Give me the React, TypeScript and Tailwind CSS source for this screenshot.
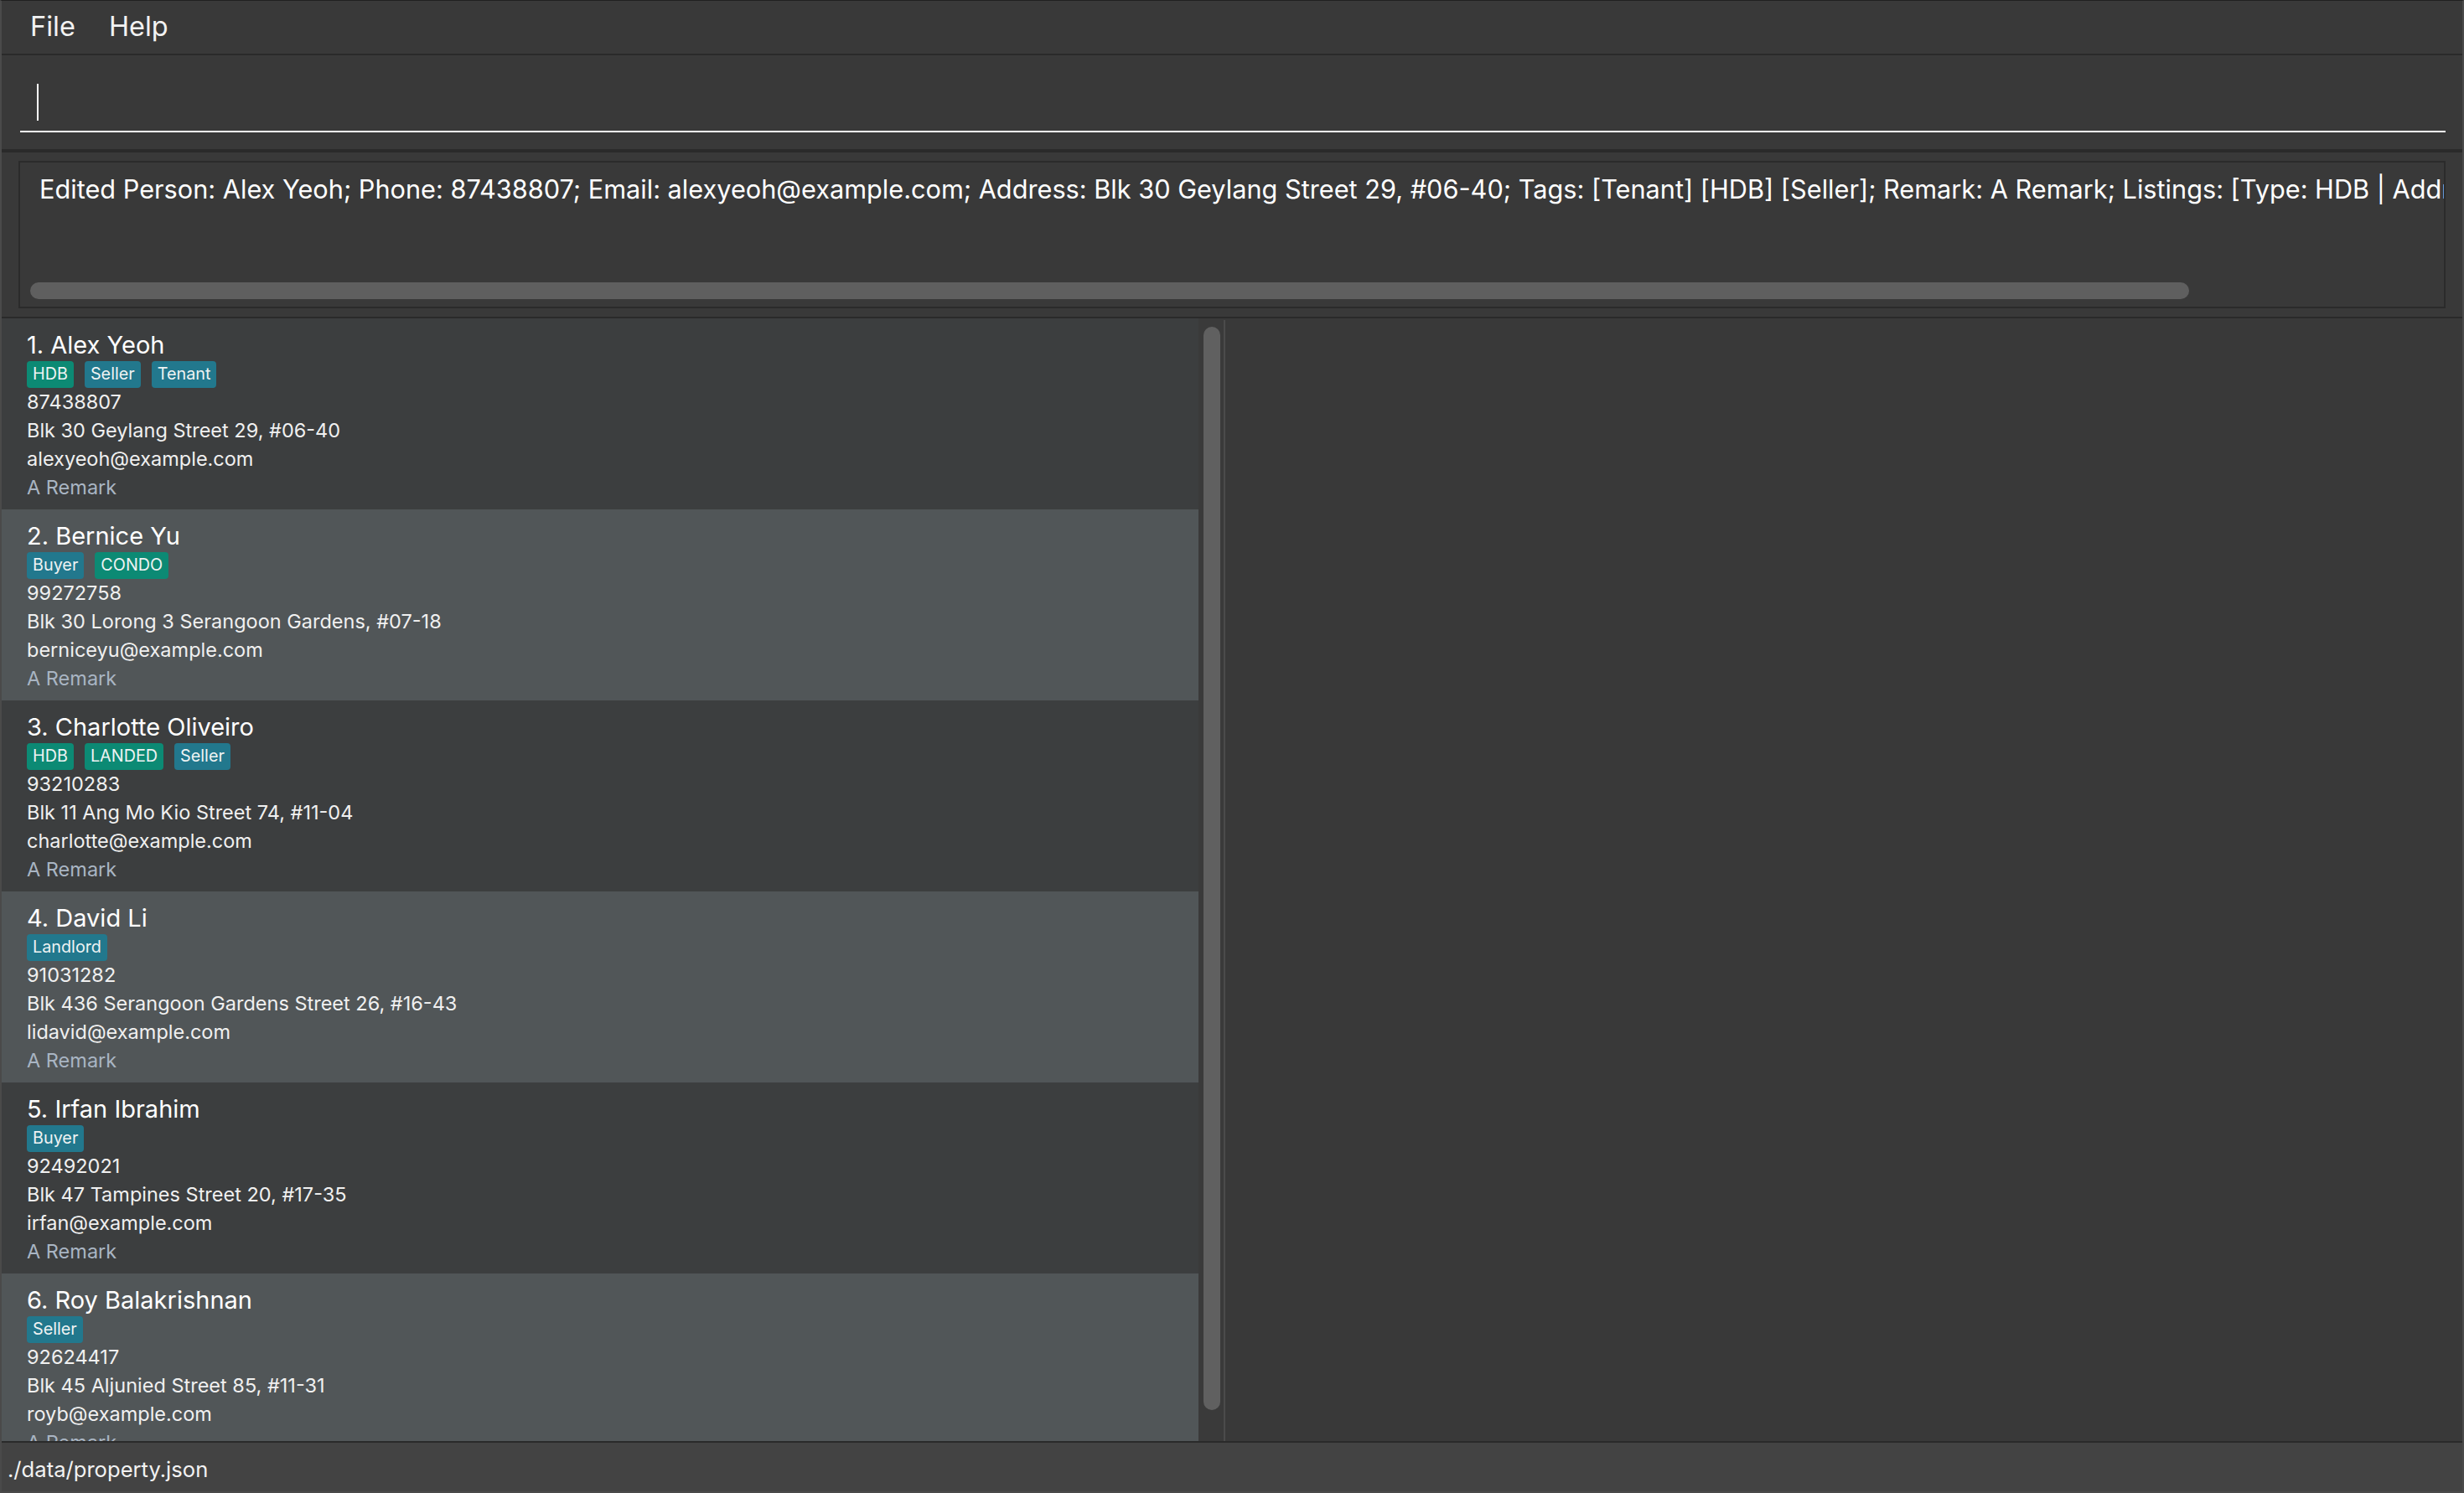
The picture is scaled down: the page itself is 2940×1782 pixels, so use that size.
import React from "react"

type Tag = { label: string; kind: "type" | "role" }

interface Person {
  name: string
  tags: Tag[]
  phone: string
  address: string
  email: string
  remark: string
}

const people: Person[] = [
  {
    name: "Alex Yeoh",
    tags: [
      { label: "HDB", kind: "type" },
      { label: "Seller", kind: "role" },
      { label: "Tenant", kind: "role" },
    ],
    phone: "87438807",
    address: "Blk 30 Geylang Street 29, #06-40",
    email: "alexyeoh@example.com",
    remark: "A Remark",
  },
  {
    name: "Bernice Yu",
    tags: [
      { label: "Buyer", kind: "role" },
      { label: "CONDO", kind: "type" },
    ],
    phone: "99272758",
    address: "Blk 30 Lorong 3 Serangoon Gardens, #07-18",
    email: "berniceyu@example.com",
    remark: "A Remark",
  },
  {
    name: "Charlotte Oliveiro",
    tags: [
      { label: "HDB", kind: "type" },
      { label: "LANDED", kind: "type" },
      { label: "Seller", kind: "role" },
    ],
    phone: "93210283",
    address: "Blk 11 Ang Mo Kio Street 74, #11-04",
    email: "charlotte@example.com",
    remark: "A Remark",
  },
  {
    name: "David Li",
    tags: [{ label: "Landlord", kind: "role" }],
    phone: "91031282",
    address: "Blk 436 Serangoon Gardens Street 26, #16-43",
    email: "lidavid@example.com",
    remark: "A Remark",
  },
  {
    name: "Irfan Ibrahim",
    tags: [{ label: "Buyer", kind: "role" }],
    phone: "92492021",
    address: "Blk 47 Tampines Street 20, #17-35",
    email: "irfan@example.com",
    remark: "A Remark",
  },
  {
    name: "Roy Balakrishnan",
    tags: [{ label: "Seller", kind: "role" }],
    phone: "92624417",
    address: "Blk 45 Aljunied Street 85, #11-31",
    email: "royb@example.com",
    remark: "A Remark",
  },
]

const resultText =
  "Edited Person: Alex Yeoh; Phone: 87438807; Email: alexyeoh@example.com; Address: Blk 30 Geylang Street 29, #06-40; Tags: [Tenant] [HDB] [Seller]; Remark: A Remark; Listings: [Type: HDB | Address: Blk 30 Geylang Street 29, #06-40 | Price: 500000]"

function PersonCard({ person, index }: { person: Person; index: number }) {
  const bg = index % 2 === 0 ? "bg-[#3c3e3f]" : "bg-[#515658]"
  return (
    <div className={`${bg} h-[228px] shrink-0 pl-[30px] pt-[15px] text-white`}>
      <div className="text-[29px] leading-[34px] whitespace-nowrap">
        {index + 1}. {person.name}
      </div>
      <div className="mt-[2px] flex gap-[13px]">
        {person.tags.map(tag => (
          <span
            key={tag.label}
            className={`flex h-[32px] items-center rounded-[4px] px-[7px] text-[19.8px] text-[#eef3f3] ${
              tag.kind === "type" ? "bg-[#0c8a74]" : "bg-[#22788d]"
            }`}
          >
            {tag.label}
          </span>
        ))}
      </div>
      <div className="text-[23.5px] leading-[34px] text-[#f0f0f0]">
        <div>{person.phone}</div>
        <div>{person.address}</div>
        <div>{person.email}</div>
        <div className="text-[#a9b5c3]">{person.remark}</div>
      </div>
    </div>
  )
}

export default function App() {
  return (
    <div
      className="flex h-[1782px] w-[2940px] flex-col overflow-hidden border-x-2 border-t border-b-2 border-x-[#4a4a4a] border-t-[#202020] border-b-[#4a4a4a] bg-[#393939] text-white"
      style={{ fontFamily: "Inter, 'Liberation Sans', sans-serif" }}
    >
      {/* menu bar */}
      <div className="flex h-[63px] shrink-0 items-center pl-[14px] text-[32.5px] text-[#f2f2f2]">
        <span className="px-[20px]">File</span>
        <span className="px-[20px]">Help</span>
      </div>
      <div className="h-[2px] shrink-0 bg-[#2a2a2a]" />

      {/* command box */}
      <div className="h-[112px] shrink-0 pl-[22px] pr-[20px] pt-[34px]">
        <div className="flex h-[44px] pl-[20px]">
          <div className="h-full w-[2px] bg-white" />
        </div>
        <div className="mt-[12px] h-[2px] bg-white" />
      </div>
      <div className="h-[4px] shrink-0 bg-[#2a2a2a]" />

      {/* result display */}
      <div className="h-[196px] shrink-0 px-[20px] py-[10px]">
        <div className="flex h-[176px] flex-col overflow-hidden border-2 border-[#2b2b2b]">
          <div className="whitespace-nowrap pl-[23px] pt-[12px] text-[30.7px] leading-[40px] text-white">
            {resultText}
          </div>
          <div className="flex-1" />
          <div className="mb-[9px] pl-[12px]">
            <div className="h-[20px] w-[2576px] rounded-full bg-[#5f5f5f]" />
          </div>
        </div>
      </div>
      <div className="h-[2px] shrink-0 bg-[#2a2a2a]" />

      {/* main split */}
      <div className="flex h-[1340px] shrink-0">
        <div className="flex w-[1458px] shrink-0">
          <div className="flex w-[1428px] flex-col overflow-hidden">
            {people.map((p, i) => (
              <PersonCard key={p.name} person={p} index={i} />
            ))}
          </div>
          <div className="w-[30px] bg-[#3a3a3a] pl-[6px] pt-[10px]">
            <div className="h-[1293px] w-[20px] rounded-[10px] bg-[#606060]" />
          </div>
        </div>
        <div className="mt-[2px] w-[2px] bg-[#4b4b4b]" />
        <div className="flex-1 bg-[#393939]" />
      </div>
      <div className="h-[2px] shrink-0 bg-[#2a2a2a]" />

      {/* status bar */}
      <div className="flex h-[58px] shrink-0 items-center bg-[#434343] pl-[7px] pt-[6px] text-[25.6px] leading-[36px] text-[#f2f2f2]">
        ./data/property.json
      </div>
    </div>
  )
}
